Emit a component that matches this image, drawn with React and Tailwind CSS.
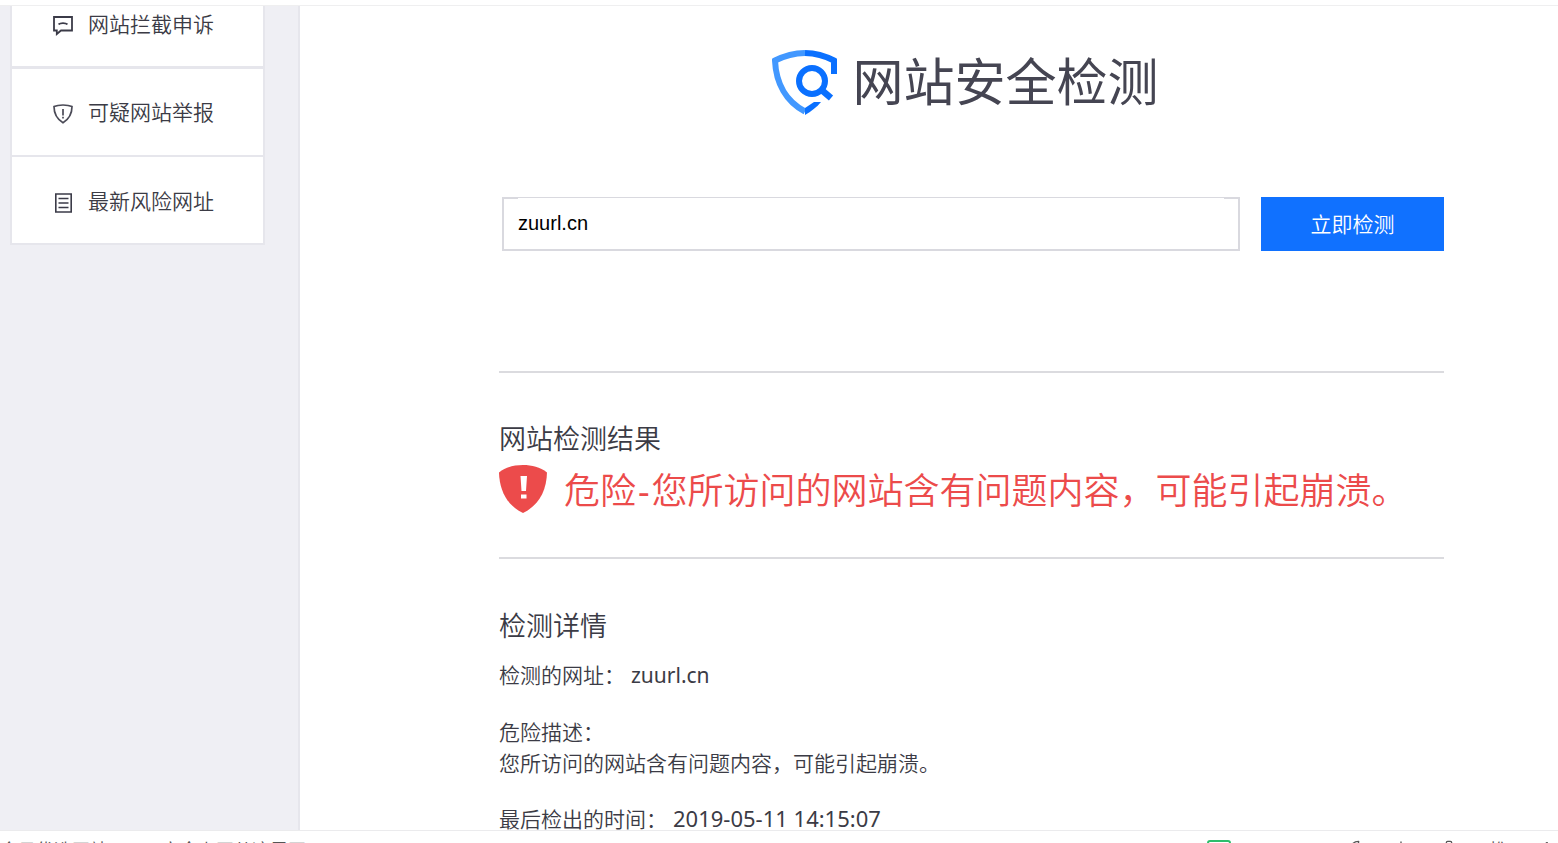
import { useState } from 'react';
import { Download, Rocket, Trash2, Volume2 } from 'lucide-react';

const menu = [
  { name: '网站拦截申诉', icon: AppealIcon, size: 'h-[63px] pb-6 border-b-[3px]' },
  { name: '可疑网站举报', icon: ReportIcon, size: 'h-[88px] border-b-2' },
  { name: '最新风险网址', icon: ListIcon, size: 'h-[88px] pt-0.5 border-b-2' },
];

function AppealIcon() {
  return (
    <svg className="mt-1 h-5 w-5" viewBox="0 0 20 20" fill="none" stroke="#3b3b48" strokeWidth="1.8">
      <path d="M1 1H19V14.5H8L3.8 18V14.5H1Z" />
      <path d="M5.5 8.4C7.5 6.6 12.5 6.6 14.5 8.4" />
    </svg>
  );
}

function ReportIcon() {
  return (
    <svg className="mt-1 h-5 w-5" viewBox="0 0 20 20" fill="none" stroke="#4b4b57" strokeWidth="1.7">
      <path d="M10 1C13 1 16.5 1.4 19 2.6C19 10.5 15.5 15.5 10 18.8C4.5 15.5 1 10.5 1 2.6C3.5 1.4 7 1 10 1Z" />
      <path d="M10 5V11.5M10 12.8V14.6" />
    </svg>
  );
}

function ListIcon() {
  return (
    <svg className="mt-1 h-5 w-5" viewBox="0 0 20 20" fill="none" stroke="#3b3b48" strokeWidth="1.6">
      <path d="M2.8 1H18.2V19H2.8Z" />
      <path d="M5.5 5.5H15.5M5.5 10H15.5M5.5 14.5H15.5" />
    </svg>
  );
}

function Logo() {
  return (
    <svg className="h-[66px] w-[66px]" viewBox="0 0 66 66" fill="none">
      <path d="M33 3C23 3.2 12.5 5.8 3 10.5C4 33 14 51.5 33 61.5" stroke="#4298ff" strokeWidth="6" />
      <path d="M33 3C43 3.2 52.5 5.6 62 10.5V24" stroke="#0a70ff" strokeWidth="6" />
      <path d="M33 58L42 52H49C45 57 39 61.5 33 65Z" fill="#0a70ff" />
      <circle cx="40" cy="31" r="13" stroke="#0a70ff" strokeWidth="6" />
      <path d="M49 39.5L59 48" stroke="#0a70ff" strokeWidth="6.5" />
    </svg>
  );
}

function DangerIcon() {
  return (
    <svg className="h-12 w-12 shrink-0" viewBox="0 0 48 48">
      <path d="M24 0C33 0 41 2 48 7.5C47.5 25 40.5 40 24 48C7.5 40 .5 25 0 7.5C7 2 15 0 24 0Z" fill="#ec4b4b" />
      <path d="M21.5 11H28L27 26H22.5ZM22 29.5H27.5V33.5H22Z" fill="#fff" />
    </svg>
  );
}

function App() {
  const [url, setUrl] = useState('zuurl.cn');

  return (
    <div className="flex h-screen flex-col overflow-hidden bg-white font-['Noto_Sans','Noto_Sans_CJK_SC',sans-serif] text-[21px] font-[350] text-[#3b3b45]">
      <header className="h-[6px] shrink-0 border-b border-[#efeff0]" />

      <div className="flex min-h-0 flex-1 overflow-hidden">
        <aside className="w-[300px] shrink-0 border-r-2 border-[#e6e6ec] bg-[#efeff4] pr-[33px] pl-[10px]">
          <nav className="border-x-2 border-[#e6e6ec] bg-white">
            {menu.map(({ name, icon: Icon, size }) => (
              <a key={name} href="#" className={`flex items-center gap-[15px] border-[#e6e6ec] pl-[41px] leading-8 ${size}`}>
                <Icon />
                {name}
              </a>
            ))}
          </nav>
        </aside>

        <main className="min-w-0 flex-1 pt-[43px] pr-[114px] pl-[199px]">
          <div className="flex h-[68px] items-center justify-center gap-[14px] pr-3">
            <Logo />
            <h1 className="pb-1 text-[51px] leading-[64px] font-normal text-[#454552]">网站安全检测</h1>
          </div>

          <form className="mt-20 flex gap-[21px] pl-[3px]" onSubmit={(e) => e.preventDefault()}>
            <div className="flex h-[54px] flex-1 border-2 border-[#d9d9df] px-[14px]">
              <input
                type="text"
                aria-label="网址"
                value={url}
                onChange={(e) => setUrl(e.target.value)}
                className="relative -mt-px w-full bg-white pb-0.5 font-['Liberation_Sans',sans-serif] text-[20px] font-normal text-black outline-none"
              />
            </div>
            <button type="submit" className="h-[54px] w-[183px] bg-[#1071ff] pt-0.5 text-white">
              立即检测
            </button>
          </form>

          <section className="mt-[120px] border-t-2 border-[#dbdbdf] pt-[46px]">
            <h2 className="text-[27px] leading-10">网站检测结果</h2>
            <div className="mt-1 flex items-center gap-[17px]">
              <DangerIcon />
              <p className="pt-1 text-[36px] leading-[48px] whitespace-nowrap text-[#ec4b4b]">
                危险<span className="mx-0.5 font-normal">-</span>您所访问的网站含有问题内容&#xff0c;可能引起崩溃。
              </p>
            </div>
          </section>

          <section className="mt-[42px] border-t-2 border-[#dbdbdf] pt-[47px] leading-[31px]">
            <h2 className="text-[27px] leading-10">检测详情</h2>
            <p className="mt-[14px]">
              检测的网址&#xff1a;<span className="ml-[6px] font-normal">zuurl.cn</span>
            </p>
            <p className="mt-[26px]">危险描述&#xff1a;</p>
            <p>您所访问的网站含有问题内容&#xff0c;可能引起崩溃。</p>
            <p className="mt-6 whitespace-nowrap">
              最后检出的时间&#xff1a;<span className="ml-[6px] text-[22px] font-normal">2019-05-11 14:15:07</span>
            </p>
          </section>
        </main>
      </div>

      {/* status bar, mostly below the fold */}
      <footer className="flex h-[13px] shrink-0 items-start justify-between overflow-hidden border-t border-[#ebebed] pt-[9px] text-[18px] leading-5 text-[#555]">
        <div className="flex gap-[54px]">
          <span>今日优选网站</span>
          <span>安全上网从这里开</span>
        </div>
        <div className="flex w-[351px] items-start justify-between pr-0.5">
          <div className="h-6 w-6 rounded-[3px] border-2 border-[#2dbe6c]" />
          <div className="flex w-[212px] justify-between">
            <Rocket className="h-4 w-4" />
            <Download className="h-4 w-4" />
            <Trash2 className="h-4 w-4" />
            <span>推</span>
            <Volume2 className="h-4 w-4" />
          </div>
        </div>
      </footer>
    </div>
  );
}

export default App;
